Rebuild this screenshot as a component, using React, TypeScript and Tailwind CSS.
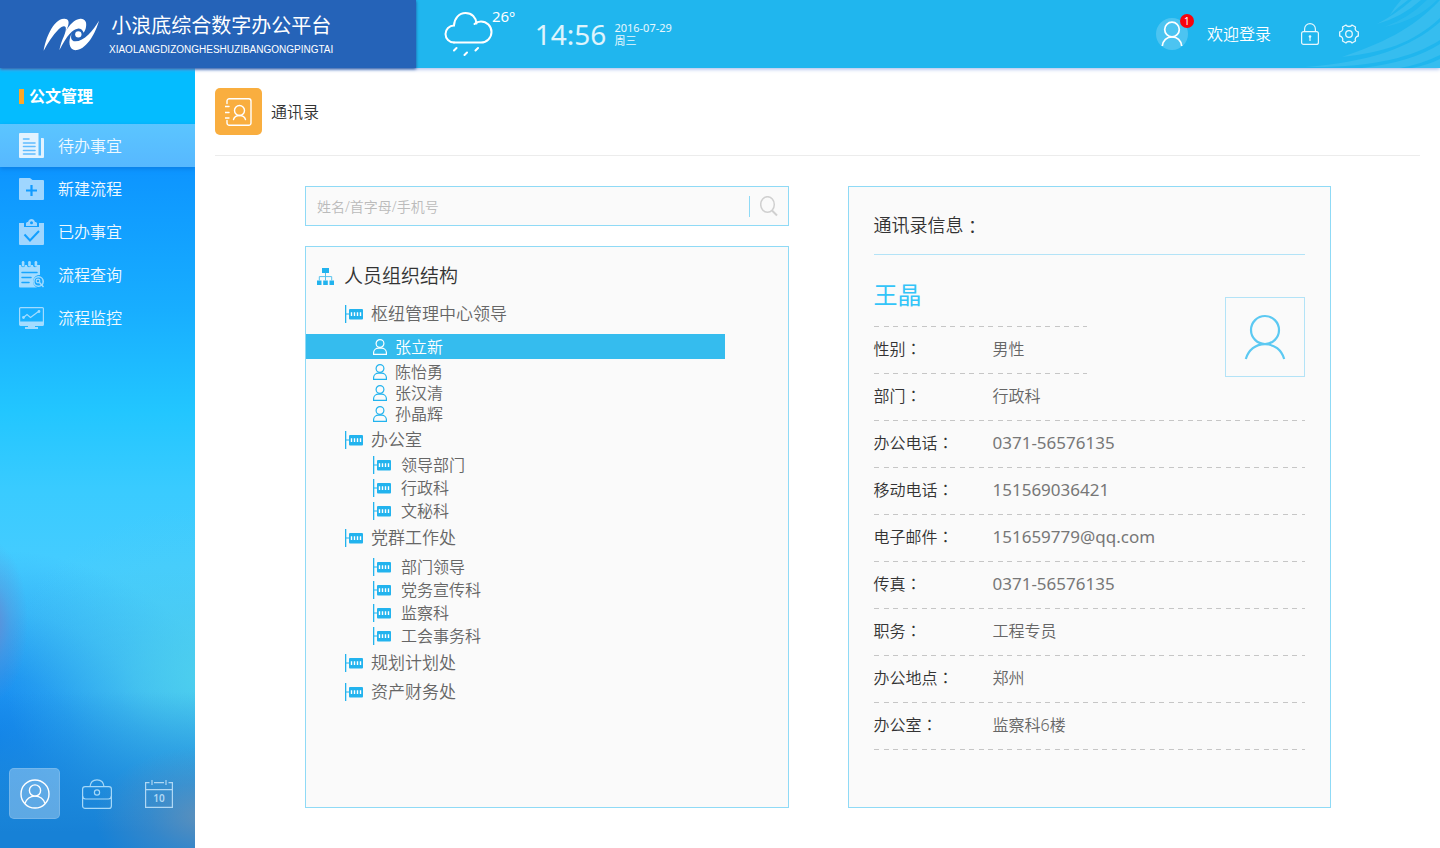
import { useState } from 'react'
import type { ReactNode } from 'react'
import clsx from 'clsx'

interface MenuItem {
  label: string
  icon: ReactNode
}

interface TreeGroup {
  name: string
  kind?: 'person' | 'dept'
  children?: string[]
  childrenClass?: string
}

interface InfoRow {
  label: string
  value: string
  latin?: boolean
}

const DASH =
  'bg-[repeating-linear-gradient(90deg,#c6c6c6_0_5px,transparent_5px_10px,#c6c6c6_10px_15px,transparent_15px_19px)]'

const menu: MenuItem[] = [
  {
    label: '待办事宜',
    icon: (
      <svg width="25" height="25" viewBox="0 0 25 25" fill="#e3f3ff">
        <path d="M1 0h18.500v22.500H22V5h2a1 1 0 0 1 1 1v18a1 1 0 0 1-1 1H1a1 1 0 0 1-1-1V1a1 1 0 0 1 1-1z" />
        <path d="M4.500 6H10M4.500 10H16M4.500 13.500H16M4.500 17.500H16M4.500 21H16" stroke="#5fbcff" strokeWidth="1.600" strokeLinecap="round" />
      </svg>
    ),
  },
  {
    label: '新建流程',
    icon: (
      <svg width="25" height="22" viewBox="0 0 25 22" fill="#9fd6ff">
        <path d="M1 0h10l2.500 2H24a1 1 0 0 1 1 1v18a1 1 0 0 1-1 1H1a1 1 0 0 1-1-1V1a1 1 0 0 1 1-1z" />
        <path d="M12.500 7v11M7 12.500h11" stroke="#119bff" strokeWidth="2.200" />
      </svg>
    ),
  },
  {
    label: '已办事宜',
    icon: (
      <svg width="25" height="26" viewBox="0 0 25 26" fill="#9fd6ff">
        <path d="M0 4h5v4h15V4h5v21a1 1 0 0 1-1 1H1a1 1 0 0 1-1-1z" />
        <path fillRule="evenodd" d="M7 7V4.500c0-1 1-1.500 2-1.500C9.500 1 11 0 12.500 0S15.500 1 16 3c1 0 2 .500 2 1.500V7zM12.500 2.200a1.500 1.500 0 1 0 0 3 1.500 1.500 0 0 0 0-3z" />
        <path d="M5.500 15.500l5.500 6 9-9.500" stroke="#129fff" strokeWidth="2" fill="none" />
      </svg>
    ),
  },
  {
    label: '流程查询',
    icon: (
      <svg width="25" height="27" viewBox="0 0 25 27" fill="#a3dcff">
        <path d="M0 4h2c0 3 4 3 4 0h2c0 3 4 3 4 0h2c0 3 4 3 4 0h2l1 0v10a6.500 6.500 0 0 0-3 12.500H1a1 1 0 0 1-1-1z" />
        <rect x="2.800" y="0" width="2.600" height="5.500" rx="1.300" />
        <rect x="9.200" y="0" width="2.600" height="5.500" rx="1.300" />
        <rect x="15.600" y="0" width="2.600" height="5.500" rx="1.300" />
        <path d="M3 11.500h15M3 16.500h9M3 21.500h7" stroke="#16a5ff" strokeWidth="1.500" strokeLinecap="round" />
        <circle cx="19.500" cy="20.500" r="4.700" fill="#1ba8ff" stroke="#a3dcff" strokeWidth="1.500" />
        <circle cx="19" cy="20" r="1.800" fill="none" stroke="#a3dcff" strokeWidth="1.200" />
        <path d="M20.500 21.500l4 4.500" stroke="#a3dcff" strokeWidth="1.500" />
      </svg>
    ),
  },
  {
    label: '流程监控',
    icon: (
      <svg width="25" height="22" viewBox="0 0 25 22" fill="none" stroke="#a3dcff" strokeWidth="1.200">
        <rect x=".600" y=".600" width="23.800" height="17.800" rx="1" />
        <path d="M1 14.500h23v4H1zM9 18.500h7v2H9zM6 20h13v2H6z" fill="#a3dcff" stroke="none" />
        <path d="M4.500 10.500l3.500-3 3.500 3L19.500 4.500" />
        <circle cx="4.500" cy="10.500" r=".800" fill="#a3dcff" />
        <circle cx="20" cy="4.500" r=".800" fill="#a3dcff" />
      </svg>
    ),
  },
]

const tree: TreeGroup[] = [
  {
    name: '枢纽管理中心领导',
    kind: 'person',
    children: ['张立新', '陈怡勇', '张汉清', '孙晶辉'],
    childrenClass: 'pt-[7px]',
  },
  { name: '办公室', kind: 'dept', children: ['领导部门', '行政科', '文秘科'] },
  {
    name: '党群工作处',
    kind: 'dept',
    children: ['部门领导', '党务宣传科', '监察科', '工会事务科'],
    childrenClass: 'pt-1',
  },
  { name: '规划计划处' },
  { name: '资产财务处' },
]

const infoRows: InfoRow[] = [
  { label: '部门', value: '行政科' },
  { label: '办公电话', value: '0371-56576135', latin: true },
  { label: '移动电话', value: '151569036421', latin: true },
  { label: '电子邮件', value: '151659779@qq.com', latin: true },
  { label: '传真', value: '0371-56576135', latin: true },
  { label: '职务', value: '工程专员' },
  { label: '办公地点', value: '郑州' },
  { label: '办公室', value: '监察科6楼' },
]

function DeptIcon() {
  return (
    <svg width="18" height="18" viewBox="0 0 18 18" fill="#22b3ee" className="shrink-0">
      <path d="M0 0h1.300v18H0zM1 8.500h3v1H1z" />
      <rect x="4" y="4" width="14" height="10.500" rx="1" />
      <path d="M6.500 7.300v3.600M9.500 7.300v3.600M12.500 7.300v3.600M15.500 7.300v3.600" stroke="#fff" strokeWidth="1.400" />
    </svg>
  )
}

function PersonIcon() {
  return (
    <svg width="14" height="16" viewBox="0 0 14 16" fill="none" stroke="currentColor" strokeWidth="1.200" className="shrink-0">
      <circle cx="7" cy="4.500" r="3.900" />
      <path d="M.600 15.400v-1.800c0-2.700 2.400-4.400 5-4.400h2.800c2.600 0 5 1.700 5 4.400v1.800z" />
    </svg>
  )
}

function Colon() {
  return <span className="font-['Noto_Sans_CJK_TC',sans-serif] leading-none">：</span>
}

function Header() {
  return (
    <header className="relative z-10 flex h-[68px] bg-[#20b6ee] text-white shadow-[0_1px_4px_#9db4e8]">
      <div className="flex w-[416px] shrink-0 items-center bg-[#2563b8] pl-9 shadow-[0_1px_3px_#1d4f9c]">
        <svg width="72" height="50" viewBox="0 0 216 150" fill="#fff" className="shrink-0">
          <path d="M23 125C28 92 50 31 84 29c12-1 16 8 13 18-2 8-5 14-9 21 12-20 27-38 45-39 14-1 20 10 17 25-1 8-4 13-7 17-3-8-10-13-18-12-15 2-31 18-55 65 3-16 8-30 14-43 4-10 7-20 5-26-3-7-12-3-21 6-18 18-32 40-45 64z" />
          <path d="M108 71c-6 14-2 25 9 26 26 1 55-33 72-62-10 36-35 82-66 88-22 4-30-24-15-52z" />
          <circle cx="127" cy="76" r="9.500" />
        </svg>
        <div className="ml-px flex flex-col items-center gap-1 pt-1">
          <h1 className="text-[20px] leading-6 font-normal">小浪底综合数字办公平台</h1>
          <p className="font-['Liberation_Sans',sans-serif] text-[10px] leading-4 font-normal">
            XIAOLANGDIZONGHESHUZIBANGONGPINGTAI
          </p>
        </div>
      </div>

      <div className="relative flex flex-1 items-center pr-[81px] pl-[28px]">
        <svg width="140" height="68" viewBox="0 0 140 68" fill="#36bdef" className="absolute top-0 right-0">
          <path d="M90 15Q94 8 101 0H108Q98 7 90 15z" />
          <path d="M77 24Q96 14 112 0H121Q102 17 77 24z" />
          <path d="M84 27Q108 19 127 0H137Q116 21 84 27z" opacity=".6" />
          <path d="M42 57C80 44 112 30 140 0V18C112 44 84 52 42 57z" />
          <path d="M5 67C70 62 110 48 140 22V40C112 58 70 68 5 67z" />
          <path d="M62 68Q112 62 140 44V55Q122 64 100 68z" />
          <path d="M112 68Q128 65 140 59V68z" />
        </svg>

        <svg width="50" height="44" viewBox="0 0 50 44" fill="none" stroke="#fff" strokeWidth="2" strokeLinecap="round">
          <path d="M10 30.500a8.500 8.500 0 0 1 0-17c.3-7 5-12.500 11.500-12.500S32 5.500 32.500 11.500" />
          <path d="M30.500 12c1.500-1.500 4-2.500 6.500-2.500a10.400 10.400 0 0 1 0 21H10" />
          <path d="M12.500 36l-2.500 2.500M23 40.500l-2.500 2.500M34 36l-2.500 2.500" />
        </svg>
        <span className="-ml-[2px] self-start pt-[6px] text-[15px] leading-5 font-normal">26º</span>
        <time className="ml-5 text-[28px] leading-9 font-normal text-white/85">14:56</time>
        <div className="ml-2 flex flex-col text-[11px] leading-[13px] font-normal text-white/90">
          <span>2016-07-29</span>
          <span>周三</span>
        </div>

        <div className="relative ml-auto flex items-center">
          <button type="button" aria-label="1" className="relative size-8 rounded-full bg-[#4cc4f1]">
            <svg width="32" height="32" viewBox="0 0 32 32" fill="none" stroke="#fff" strokeWidth="1.700">
              <circle cx="16" cy="11.500" r="7.300" />
              <path d="M6.300 28c.5-5.500 4.500-9.200 9.700-9.200s9.200 3.700 9.700 9.200" />
            </svg>
            <span className="absolute -top-1 -right-[6px] flex size-[14px] items-center justify-center rounded-full bg-[#f8040c] text-[10px] leading-none font-normal">
              1
            </span>
          </button>
          <a href="#login" className="ml-[19px] text-[16px] leading-6">欢迎登录</a>
          <button type="button" aria-label="锁定" className="ml-[30px]">
            <svg width="18" height="22" viewBox="0 0 18 22" fill="none" stroke="#e6f7fd" strokeWidth="1.200">
              <rect x=".600" y="8.600" width="16.800" height="12.800" rx="2" />
              <path d="M3.600 8.500V6a5.400 5.400 0 0 1 10.800 0v2.500M9 14v4" />
              <circle cx="9" cy="13.500" r="1.300" fill="#e6f7fd" stroke="none" />
            </svg>
          </button>
          <button type="button" aria-label="设置" className="ml-5">
            <svg width="20" height="20" viewBox="0 0 20 20" fill="none" stroke="#e6f7fd" strokeWidth="1.300" strokeLinejoin="round">
              <path d="M7 1c1 2 5 2 6 0l3.500 2C15.500 5.500 17 7.600 19.300 8v4c-2.300.4-3.800 2.500-2.800 5L13 19c-1-2-5-2-6 0l-3.500-2c1-2.500-.5-4.600-2.800-5V8C3 7.600 4.500 5.500 3.500 3z" />
              <circle cx="10" cy="10" r="3.300" />
            </svg>
          </button>
        </div>
      </div>
    </header>
  )
}

function Sidebar() {
  const [active, setActive] = useState(0)

  return (
    <aside className="flex w-[195px] shrink-0 flex-col overflow-hidden bg-[radial-gradient(36px_80px_at_-8px_71%,#6a86d0dd,#6a86d055_50%,#6a86d000),radial-gradient(110px_70px_at_105%_96%,#6d92b4cc,#6d92b455_50%,#6d92b400),linear-gradient(#1781d600_80%,#1781d6bb_92%,#1781d6_98%),radial-gradient(200px_170px_at_105%_78%,#4dd0eeee,#4dd0ee66_45%,#4dd0ee00),radial-gradient(250px_190px_at_-15px_86%,#1186f0,#1186f0bb_35%,#1186f044_68%,#1186f000),linear-gradient(#0d95ff_13%,#18aeff_31%,#22c6ff_44%,#39cbff_54%,#45ccff_64%,#48bff0_82%)]">
      <h2 className="flex h-14 items-center gap-[5px] bg-[#04bcff] pl-[19px] text-[16px] font-bold text-white">
        <span className="h-[15px] w-[5px] bg-[#ffa726]" />
        公文管理
      </h2>
      <nav>
        {menu.map((item, i) => (
          <button
            key={item.label}
            type="button"
            onClick={() => setActive(i)}
            className={clsx(
              'flex h-[43px] w-full items-center pl-[19px] text-[16px] text-[#f0f9ff]',
              i === active && 'bg-linear-to-b from-[#5bc5ff] to-[#57b8ff] shadow-[0_2px_4px_#0b7fe6]',
            )}
          >
            {item.icon}
            <span className="ml-[14px]">{item.label}</span>
          </button>
        ))}
      </nav>

      <div className="mt-auto flex gap-[11px] px-[9px] pb-[29px] text-white">
        <button type="button" aria-label="个人" className="flex size-[51px] items-center justify-center rounded-[5px] border border-white/15 bg-white/30">
          <svg width="30" height="30" viewBox="0 0 30 30" fill="none" stroke="#fff" strokeWidth="1.400">
            <circle cx="15" cy="15" r="14" />
            <circle cx="15" cy="11.500" r="5.600" />
            <path d="M5 24.500c1.500-4.500 5-7.400 10-7.400s8.500 2.900 10 7.400" />
          </svg>
        </button>
        <button type="button" aria-label="工作" className="flex size-[51px] items-center justify-center">
          <svg width="30" height="30" viewBox="0 0 30 30" fill="none" stroke="#a5d8f8" strokeWidth="1.200">
            <rect x=".600" y="7.600" width="28.800" height="21.800" rx="2.500" />
            <path d="M.600 17c0 2 1 3 3 3h22.800c2 0 3-1 3-3M8 7.500C8.500 3 11.500.800 15 .800S21.500 3 22 7.500" />
            <circle cx="15" cy="13.500" r="2.600" />
          </svg>
        </button>
        <button type="button" aria-label="日历" className="flex size-[51px] items-center justify-center">
          <svg width="28" height="28" viewBox="0 0 28 28" fill="none" stroke="#b0d8f4" strokeWidth="1.200">
            <path d="M4.500 2.600H.600v24.800h26.800V2.600h-3.900M9 2.600h10M.600 9.600h26.800M7 0v5M21 0v5" />
            <text x="14" y="22" textAnchor="middle" fill="#b0d8f4" stroke="none" fontSize="10" fontWeight="600">10</text>
          </svg>
        </button>
      </div>
    </aside>
  )
}

function OrgTree() {
  const [selected, setSelected] = useState('张立新')

  return (
    <section className="flex-1 border border-[#8fdaf6] bg-[#fafafa] pt-[15px] pb-10 text-[#666]">
      <h3 className="flex h-7 items-center gap-[10px] pl-[11px] text-[19px] text-[#333]">
        <svg width="17" height="17" viewBox="0 0 17 17" fill="#22b3ee">
          <path d="M5 0h7v5H5zM0 12.500h4.500V17H0zM6.200 12.500h4.600V17H6.200zM12.500 12.500H17V17h-4.500z" />
          <path d="M8.500 5v7.500M2.300 12.500V8.600h12.400v3.900" fill="none" stroke="#58c3ee" />
        </svg>
        人员组织结构
      </h3>
      <ul className="mt-[11px] flex flex-col gap-[3px]">
        {tree.map((group) => (
          <li key={group.name}>
            <button type="button" className="flex h-[26px] items-center gap-2 pl-[39px] text-[17px]">
              <DeptIcon />
              {group.name}
            </button>
            {group.children && (
              <ul className={group.childrenClass}>
                {group.children.map((name) => {
                  const isSelected = name === selected
                  return (
                    <li key={name}>
                      <button
                        type="button"
                        onClick={() => setSelected(name)}
                        className={clsx(
                          'flex w-[87%] items-center pl-[67px] text-[16px]',
                          group.kind === 'dept' ? 'h-[23px] gap-[10px]' : 'gap-2',
                          group.kind === 'person' && (isSelected ? 'mb-[2px] h-[25px]' : 'h-[21px]'),
                          isSelected && 'bg-[#35bcee] text-white',
                        )}
                      >
                        {group.kind === 'dept' ? (
                          <DeptIcon />
                        ) : (
                          <span className={isSelected ? 'text-white' : 'text-[#22b3ee]'}>
                            <PersonIcon />
                          </span>
                        )}
                        {name}
                      </button>
                    </li>
                  )
                })}
              </ul>
            )}
          </li>
        ))}
      </ul>
    </section>
  )
}

function Row({ label, value, latin }: InfoRow) {
  return (
    <div>
      <div className="flex h-[46px] items-center pb-[2px]">
        <dt className="w-[119px] shrink-0 text-[#333]">
          {label}
          <Colon />
        </dt>
        <dd className={latin ? 'text-[17px] font-normal text-[#777]' : 'text-[#666]'}>{value}</dd>
      </div>
      <div className={clsx('h-px', DASH)} />
    </div>
  )
}

function InfoPanel() {
  return (
    <section className="border border-[#8fdaf6] bg-[#fafafa] px-[25px] pb-10">
      <h3 className="flex h-[68px] items-center border-b border-[#b3e3f7] pt-[10px] text-[18px] text-[#333]">
        通讯录信息
        <Colon />
      </h3>
      <dl className="text-[16px]">
        <div className="flex items-start justify-between">
          <div className="w-[213px]">
            <p className="flex h-[71px] items-center pt-2 text-[24px] font-normal text-[#33c4f8]">王晶</p>
            <div className={clsx('h-px', DASH)} />
            <Row label="性别" value="男性" />
          </div>
          <div className="mt-[42px] -mb-1 flex size-20 shrink-0 items-center justify-center border border-[#b3e3f7]">
            <svg width="42" height="46" viewBox="0 0 42 46" fill="none" stroke="#5cc9f2" strokeWidth="2.200">
              <circle cx="21" cy="16" r="14" />
              <path d="M1.800 45C4.500 36 11.500 30.200 21 30.200S37.500 36 40.200 45" />
            </svg>
          </div>
        </div>
        {infoRows.map((row) => (
          <Row key={row.label} {...row} />
        ))}
      </dl>
    </section>
  )
}

export default function App() {
  return (
    <div className="flex min-h-screen flex-col bg-white font-['Noto_Sans','Noto_Sans_CJK_SC',sans-serif] font-[350]">
      <Header />
      <div className="flex flex-1">
        <Sidebar />
        <main className="flex flex-1 flex-col pb-10">
          <div className="mx-5 flex items-center gap-[9px] border-b border-[#ececec] py-5">
            <span className="flex size-[47px] items-center justify-center rounded-[5px] bg-[#f9ae3f]">
              <svg width="27" height="28" viewBox="0 0 27 28" fill="none" stroke="#fff" strokeWidth="1.400" strokeLinecap="round">
                <path d="M2 5.500V3A2.300 2.300 0 0 1 4.300.700h19.400A2.300 2.300 0 0 1 26 3v22a2.300 2.300 0 0 1-2.300 2.300H4.300A2.300 2.300 0 0 1 2 25v-2.500" />
                <path d="M0 8.500h4M0 14.500h4M0 20h4" />
                <circle cx="14.500" cy="12.500" r="5" />
                <path d="M8.500 21.500c.8-2.700 3-4 6-4s5.200 1.300 6 4" />
              </svg>
            </span>
            <h2 className="text-[16px] text-[#333]">通讯录</h2>
          </div>

          <div className="mt-[30px] grid flex-1 grid-cols-2 gap-[59px] pr-[109px] pl-[110px]">
            <div className="flex flex-col gap-5">
              <form className="flex h-10 items-center border border-[#8fdaf6] bg-[#fafafa] pr-[10px]">
                <input
                  type="text"
                  aria-label="姓名/首字母/手机号"
                  placeholder="姓名/首字母/手机号"
                  className="h-full min-w-0 flex-1 bg-transparent pl-[11px] text-[14px] text-[#666] outline-none placeholder:text-[#bbb]"
                />
                <button type="button" aria-label="搜索" className="border-l border-[#8fdaf6] pl-[10px]">
                  <svg width="18" height="21" viewBox="0 0 18 21" fill="none" stroke="#d0d0d0" strokeWidth="1.500">
                    <ellipse cx="7.500" cy="8.500" rx="6.800" ry="7.800" />
                    <path d="M12 14.500l5 5" strokeWidth="2" />
                  </svg>
                </button>
              </form>
              <OrgTree />
            </div>
            <InfoPanel />
          </div>
        </main>
      </div>
    </div>
  )
}
